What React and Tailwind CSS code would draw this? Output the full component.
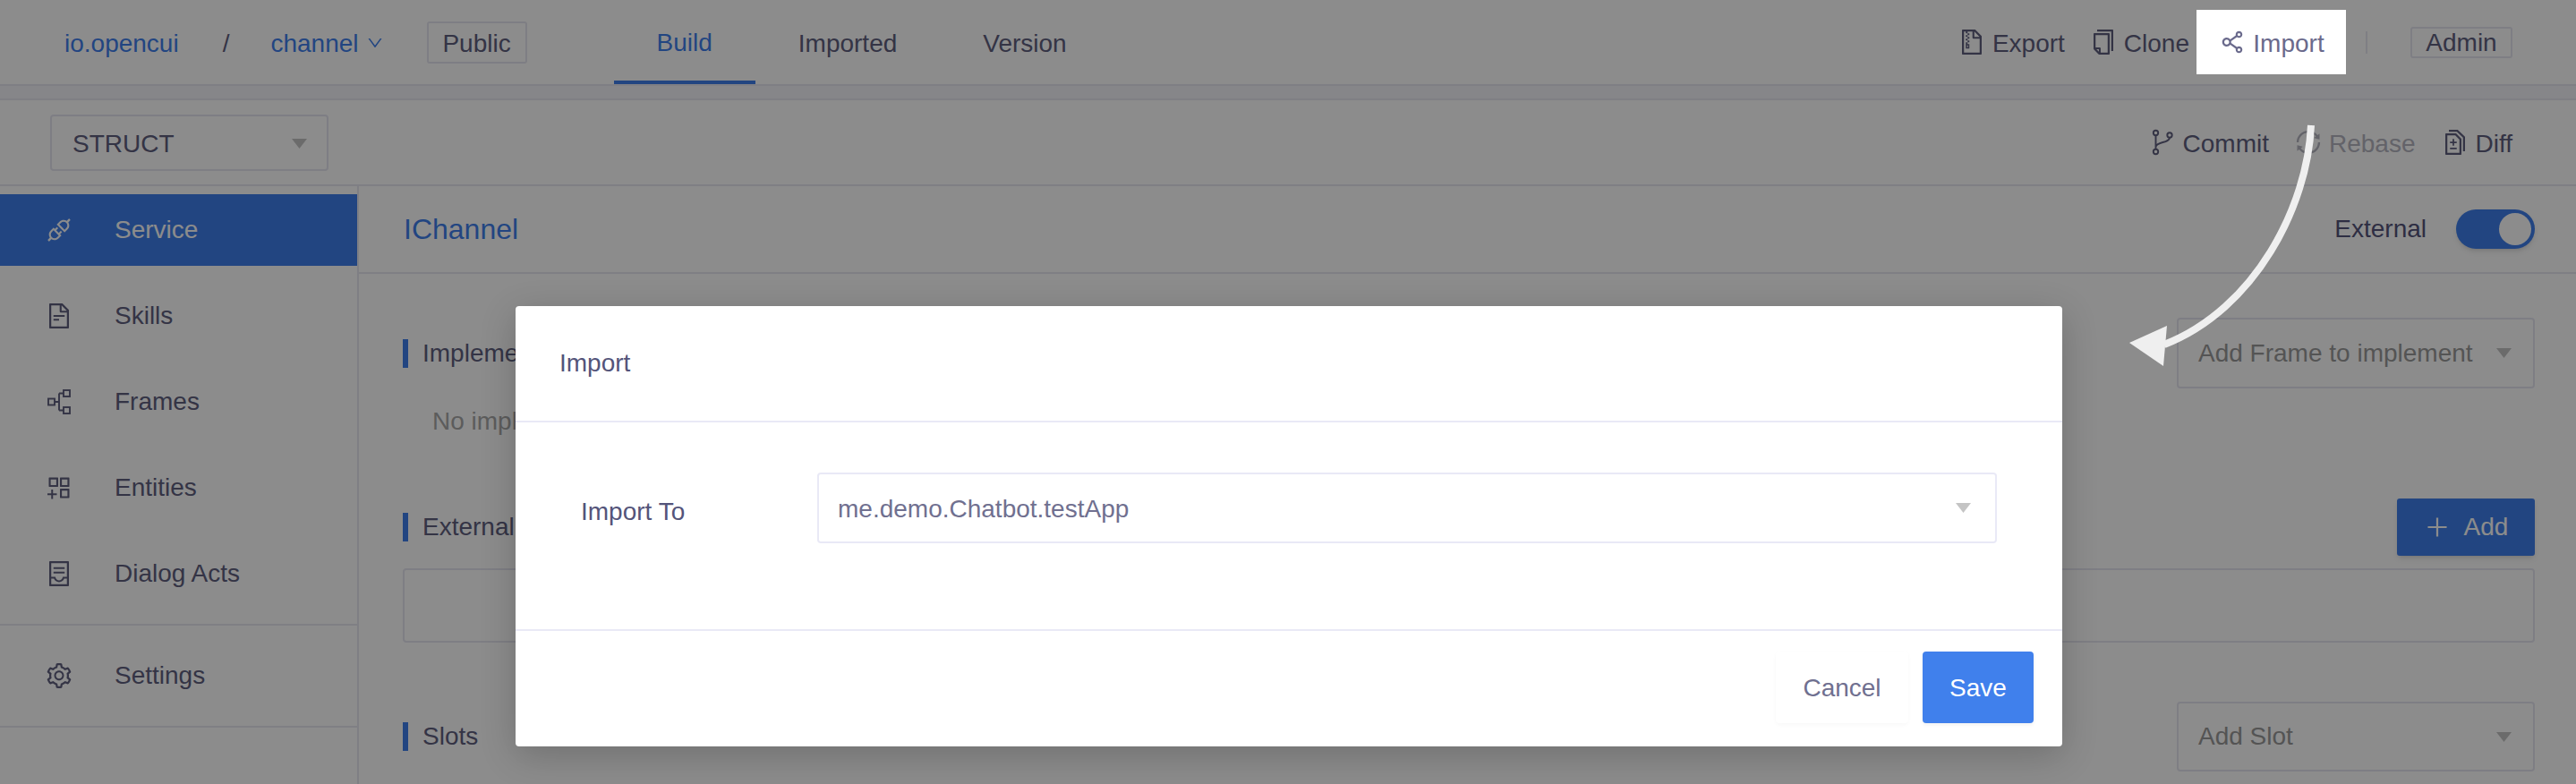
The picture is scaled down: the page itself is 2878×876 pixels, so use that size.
import React from "react";
import {
  AiOutlineApi,
  AiOutlineFileText,
  AiOutlineAppstoreAdd,
  AiOutlineContainer,
  AiOutlineSetting,
  AiOutlineFileZip,
  AiOutlineCopy,
  AiOutlineShareAlt,
  AiOutlineSync,
  AiOutlineDiff,
  AiOutlineDown,
  AiOutlinePlus,
} from "react-icons/ai";

const FramesIcon = ({ className }) => (
  <svg viewBox="0 0 32 32" fill="none" stroke="currentColor" strokeWidth="1.9" className={className}>
    <rect x="4" y="12.5" width="7" height="7" />
    <rect x="21" y="3" width="7" height="7" />
    <rect x="21" y="22" width="7" height="7" />
    <path d="M11 16h5M16 6.5v19M16 6.5h5M16 25.5h5" />
  </svg>
);

const CommitIcon = ({ className }) => (
  <svg viewBox="0 0 32 32" fill="none" stroke="currentColor" strokeWidth="1.9" className={className}>
    <circle cx="8.5" cy="5.5" r="2.7" />
    <circle cx="8.5" cy="26.5" r="2.7" />
    <circle cx="24" cy="8" r="2.7" />
    <path d="M8.5 8.2v15.6M24 10.7C24 17 9.5 15 8.5 21" />
  </svg>
);

const Caret = ({ className }) => (
  <svg viewBox="0 0 17 11" preserveAspectRatio="none" className={className} fill="currentColor">
    <path d="M0 0h17L8.5 11z" />
  </svg>
);

const navItems = [
  { label: "Skills", icon: AiOutlineFileText },
  { label: "Frames", icon: FramesIcon },
  { label: "Entities", icon: AiOutlineAppstoreAdd },
  { label: "Dialog Acts", icon: AiOutlineContainer },
];

const NavItem = ({ icon: Icon, label, active }) => (
  <div
    className={`flex items-center h-[80px] pl-[50px] ${
      active ? "bg-[#3f7fec] text-white" : "text-[#60607f]"
    }`}
  >
    <Icon className="w-[32px] h-[32px]" />
    <span className="ml-[46px]">{label}</span>
  </div>
);

const Action = ({ icon: Icon, label, className = "" }) => (
  <div className={`flex items-center gap-[7px] ${className}`}>
    <Icon className="w-[32px] h-[32px]" />
    <span className="pt-[4px]">{label}</span>
  </div>
);

const SectionTitle = ({ children }) => (
  <div className="flex items-center h-[32px] border-l-[6px] border-[#3f7fec] pl-[16px] text-[#60607f]">
    {children}
  </div>
);

const SelectBox = ({ label, className = "" }) => (
  <div
    className={`flex items-center justify-between border-2 border-[#e6e6f0] rounded-[4px] pl-[22px] pr-[24px] text-[#9a9a9a] ${className}`}
  >
    <span>{label}</span>
    <Caret className="w-[17px] h-[11px] text-[#c4c4c4]" />
  </div>
);

export default function App() {
  return (
    <div className="relative w-full h-[876px] overflow-hidden bg-white font-['Liberation_Sans',sans-serif] text-[28px] leading-none text-[#60607f]">
      {/* top bar */}
      <div className="flex items-center justify-between h-[96px] border-b-2 border-[#e8e8f0] pl-[72px] pr-[71px]">
        <div className="flex items-center h-full">
          <span className="pt-[3px] text-[#3f7fec]">io.opencui</span>
          <span className="ml-[49px] pt-[3px]">/</span>
          <span className="ml-[46px] pt-[3px] text-[#3f7fec]">channel</span>
          <AiOutlineDown className="ml-[8px] mt-[2px] w-[20px] h-[20px] text-[#3f7fec]" />
          <div className="ml-[48px] flex items-center justify-center w-[112px] h-[47px] pt-[3px] border-2 border-[#e6e6f0] rounded-[3px]">
            Public
          </div>
          <div className="flex items-center ml-[97px] h-full">
            <div className="flex items-center h-full px-[48px] pt-[5px] border-b-4 border-[#3f7fec] text-[#3f7fec] font-medium">
              Build
            </div>
            <div className="px-[48px] pt-[3px]">Imported</div>
            <div className="px-[48px] pt-[3px]">Version</div>
          </div>
        </div>
        <div className="flex items-center">
          <Action icon={AiOutlineFileZip} label="Export" />
          <Action icon={AiOutlineCopy} label="Clone" className="ml-[27px]" />
          <Action
            icon={AiOutlineShareAlt}
            label="Import"
            className="relative z-20 ml-[8px] justify-center w-[167px] h-[72px] bg-white text-[#6a6a8c]"
          />
          <div className="ml-[22px] w-[2px] h-[25px] bg-[#e8e8f0]" />
          <div className="ml-[48px] flex items-center justify-center w-[114px] h-[35px] pt-[2px] border-2 border-[#e6e6f0] rounded-[3px]">
            Admin
          </div>
        </div>
      </div>

      <div className="h-[16px] bg-[#f4f4f9] border-b-2 border-[#e8e8f0]" />

      {/* toolbar */}
      <div className="flex items-center justify-between h-[96px] border-b-2 border-[#e8e8f0] pl-[56px] pr-[71px]">
        <div className="flex items-center justify-between w-[311px] h-[63px] border-2 border-[#e6e6f0] rounded-[4px] pl-[23px] pr-[22px]">
          <span className="pt-[3px]">STRUCT</span>
          <Caret className="w-[17px] h-[11px] mt-[2px] text-[#c4c4c4]" />
        </div>
        <div className="flex items-center">
          <Action icon={CommitIcon} label="Commit" />
          <Action icon={AiOutlineSync} label="Rebase" className="ml-[28px] text-[#b4b4c0]" />
          <Action icon={AiOutlineDiff} label="Diff" className="ml-[28px]" />
        </div>
      </div>

      <div className="flex h-[669px]">
        {/* sidebar */}
        <div className="w-[401px] shrink-0 border-r-2 border-[#e8e8f0] pt-[9px]">
          <NavItem icon={AiOutlineApi} label="Service" active />
          <div className="flex flex-col gap-[16px] mt-[16px] pb-[16px] border-b-2 border-[#e8e8f0]">
            {navItems.map((item) => (
              <NavItem key={item.label} icon={item.icon} label={item.label} />
            ))}
          </div>
          <div className="py-[16px] border-b-2 border-[#e8e8f0]">
            <NavItem icon={AiOutlineSetting} label="Settings" />
          </div>
        </div>

        {/* main */}
        <div className="flex-1 min-w-0">
          <div className="flex items-center justify-between h-[98px] border-b-2 border-[#e8e8f0] pl-[50px] pr-[46px]">
            <span className="text-[32px] text-[#3f7fec]">IChannel</span>
            <div className="flex items-center gap-[33px] text-[#54547a]">
              <span>External</span>
              <div className="flex justify-end w-[88px] h-[44px] p-[4px] rounded-full bg-[#3f7fec] shadow-md">
                <div className="w-[36px] h-[36px] rounded-full bg-white" />
              </div>
            </div>
          </div>
          <div className="pt-[49px] pl-[49px] pr-[46px]">
            <div className="flex items-center justify-between h-[79px]">
              <SectionTitle>Implements</SectionTitle>
              <SelectBox label="Add Frame to implement" className="w-[400px] h-[79px]" />
            </div>
            <div className="flex items-center h-[74px] pl-[33px] text-[#a8a8a8]">No implementation</div>
            <div className="flex items-center justify-between h-[64px] mt-[49px]">
              <SectionTitle>External</SectionTitle>
              <div className="flex items-center justify-center gap-[15px] w-[154px] h-[64px] bg-[#3f7fec] rounded-[3px] text-white shadow-md">
                <AiOutlinePlus className="w-[30px] h-[30px]" />
                <span>Add</span>
              </div>
            </div>
            <div className="h-[83px] mt-[14px] border-2 border-[#e6e6f0] rounded-[4px]" />
            <div className="flex items-center justify-between h-[78px] mt-[66px]">
              <SectionTitle>Slots</SectionTitle>
              <SelectBox label="Add Slot" className="w-[400px] h-[78px]" />
            </div>
          </div>
        </div>
      </div>

      {/* modal mask */}
      <div className="absolute inset-0 z-10 bg-[rgba(0,0,0,0.45)]" />

      {/* modal */}
      <div className="absolute z-20 left-[576px] top-[342px] w-[1728px] h-[492px] flex flex-col bg-white rounded-[4px] shadow-[0_10px_40px_rgba(0,0,0,0.2)] text-[#54547a]">
        <div className="flex items-center h-[130px] border-b-2 border-[#e9e9f6] pl-[49px]">Import</div>
        <div className="flex h-[233px] border-b-2 border-[#e9e9f6] pt-[56px] pl-[73px]">
          <div className="w-[264px] h-[79px] flex items-center pt-[8px]">Import To</div>
          <div className="flex items-center justify-between w-[1318px] h-[79px] border-2 border-[#e9e9f6] rounded-[4px] pl-[21px] pr-[27px] text-[#707090]">
            <span className="pt-[2px]">me.demo.Chatbot.testApp</span>
            <Caret className="w-[17px] h-[11px] text-[#c4c4c4]" />
          </div>
        </div>
        <div className="flex justify-end gap-[16px] pt-[23px] pr-[32px]">
          <div className="flex items-center justify-center w-[148px] h-[80px] pt-[2px] bg-white rounded-[4px] text-[#707090] shadow-[0_2px_4px_rgba(0,0,0,0.03)]">
            Cancel
          </div>
          <div className="flex items-center justify-center w-[124px] h-[80px] pt-[2px] bg-[#4080ec] rounded-[4px] text-white shadow-[0_2px_4px_rgba(0,0,0,0.06)]">
            Save
          </div>
        </div>
      </div>

      {/* annotation arrow */}
      <svg className="absolute z-30 left-0 top-0 pointer-events-none" width="2878" height="876" fill="none">
        <path d="M2582 140C2578 230 2520 345 2418 385" stroke="#efefef" strokeWidth="8" />
        <path d="M2379 383L2421 364L2417 409Z" fill="#efefef" />
      </svg>
    </div>
  );
}
